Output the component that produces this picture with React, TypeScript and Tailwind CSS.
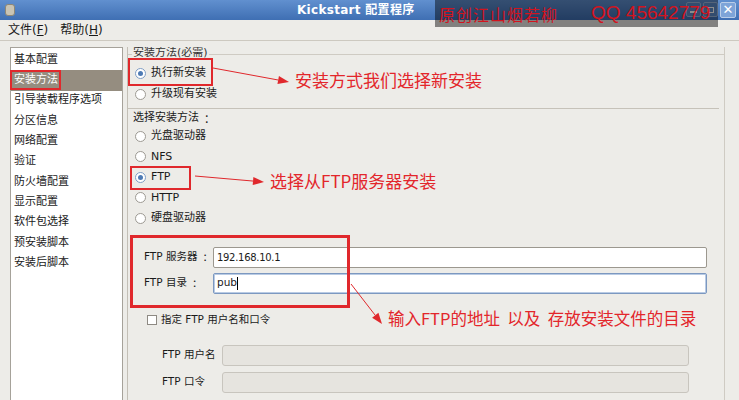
const font = "font-['DejaVu_Sans','Noto_Sans_CJK_SC',sans-serif]"

const sections = [
    "基本配置",
    "安装方法",
    "引导装载程序选项",
    "分区信息",
    "网络配置",
    "验证",
    "防火墙配置",
    "显示配置",
    "软件包选择",
    "预安装脚本",
    "安装后脚本",
]

const Radio = ({ label, checked = false, h = "h-[21px]" }: { label: string, checked?: boolean, h?: string }) => (
    <div className={`flex items-center pl-[7px] gap-[5px] ${h}`}>
        <span className={`w-[11px] h-[11px] rounded-full border bg-white flex items-center justify-center ${checked ? "border-[#7f9dc4]" : "border-[#9d9a93]"}`}>
            {checked && <span className="w-[5px] h-[5px] rounded-full bg-[#4e7bb5]" />}
        </span>
        <span>{label}</span>
    </div>
)

const Colon = () => <span className="ml-[5px] font-['Noto_Sans_CJK_SC',sans-serif]">：</span>

const Arrow = ({ x1, y1, x2, y2 }: { x1: number, y1: number, x2: number, y2: number }) => {
    const a = Math.atan2(y2 - y1, x2 - x1)
    const l = 11
    const w = 4
    const bx = x2 - l * Math.cos(a)
    const by = y2 - l * Math.sin(a)
    const p1 = `${bx + w * Math.sin(a)},${by - w * Math.cos(a)}`
    const p2 = `${bx - w * Math.sin(a)},${by + w * Math.cos(a)}`
    return (
        <g>
            <line x1={x1} y1={y1} x2={bx} y2={by} stroke="#e0282c" strokeWidth="1" />
            <polygon points={`${x2},${y2} ${p1} ${p2}`} fill="#e0282c" />
        </g>
    )
}

const App = () => {
    return (
        <div className={`relative w-[739px] h-[400px] overflow-hidden bg-[#edece8] text-[11px] text-[#1a1a1a] ${font}`}>

            {/* title bar */}
            <div className="h-[20px] bg-gradient-to-b from-[#6190cf] to-[#3f6fb3] flex items-center relative">
                <span className="ml-[5px] w-[10px] h-[12px] rounded-[3px] bg-[#c9c4b4] border border-[#8d8776]" />
                <span className="absolute left-[297px] text-white font-bold text-[12px] tracking-[0.3px]">Kickstart 配置程序</span>
                <div className="ml-auto mr-[3px] flex gap-[2px]">
                    <span className="w-[15px] h-[15px] rounded-[2px] border border-[#9bb6dc] bg-[#5d8bc9] flex items-end justify-center pb-[3px]">
                        <span className="w-[7px] h-[2px] bg-white" />
                    </span>
                    <span className="w-[15px] h-[15px] rounded-[2px] border border-[#9bb6dc] bg-[#5d8bc9] flex items-center justify-center">
                        <span className="w-[7px] h-[6px] border border-white" />
                    </span>
                    <span className="w-[16px] h-[16px] rounded-[2px] border border-[#b9cde8] bg-[#7ea4d8] text-white font-bold text-[13px] leading-[14px] text-center">✕</span>
                </div>
            </div>

            {/* menu bar */}
            <div className="h-[21px] flex items-center gap-[12px] pl-[8px] text-[12px] border-b border-[#cdc9c0]">
                <span>文件(<span className="underline">F</span>)</span>
                <span>帮助(<span className="underline">H</span>)</span>
            </div>

            {/* body */}
            <div className="flex pt-[6px] h-[359px]">
                <div className="ml-[10px] w-[113px] bg-white border border-[#a6a29a] border-b-0 pt-[2px]">
                    {sections.map((s, i) => (
                        <div key={s} className={`h-[20.3px] flex items-center pl-[3px] ${i === 1 ? "bg-[#958d80] text-white" : ""}`}>{s}</div>
                    ))}
                </div>
                <div className="ml-[2px] w-[3px] border-r border-[#c3bfb6]" />

                <div className="flex-1 flex flex-col mr-[14px] border-r border-[#cfcbc3] overflow-hidden">
                    <div className="h-[14px] flex items-center">
                        <span className="w-[4px] h-px bg-[#cfcbc3]" />
                        <span className="px-[1px] text-[#333] -mt-[2px]">安装方法(必需)</span>
                        <span className="flex-1 h-px bg-[#cfcbc3]" />
                    </div>
                    <div className="mt-[2px]">
                        <Radio label="执行新安装" checked />
                        <Radio label="升级现有安装" />
                    </div>
                    <div className="mt-[3px] h-px bg-[#c6c2b9] mr-[5px]" />
                    <div className="mt-px h-[16px] flex items-center pl-[5px]">选择安装方法<Colon /></div>
                    <Radio label="光盘驱动器" h="h-[20.5px]" />
                    <Radio label="NFS" h="h-[20.5px]" />
                    <Radio label="FTP" checked h="h-[20.5px]" />
                    <Radio label="HTTP" h="h-[20.5px]" />
                    <Radio label="硬盘驱动器" h="h-[20.5px]" />

                    <div className="mt-[18px] flex flex-col gap-[5px] pl-[16px] pr-[17px] text-[10.5px]">
                        <div className="flex items-center h-[21px]">
                            <span className="w-[69px] flex">FTP 服务器<Colon /></span>
                            <div className="flex-1 h-full bg-white border border-[#9c988f] rounded-[2px] flex items-center pl-[3px] text-[10px] tracking-[-0.3px]">192.168.10.1</div>
                        </div>
                        <div className="flex items-center h-[21px]">
                            <span className="w-[69px] flex">FTP 目录<Colon /></span>
                            <div className="flex-1 h-full bg-white border border-[#7c98c0] rounded-[2px] flex items-center pl-[3px] shadow-[inset_0_0_0_1px_#b9cbe4]">
                                pub<span className="w-px h-[13px] bg-black" />
                            </div>
                        </div>
                    </div>

                    <div className="mt-[17px] h-[18px] flex items-center gap-[4px] pl-[19px]">
                        <span className="w-[10px] h-[10px] bg-white border border-[#8e8a83]" />
                        <span className="text-[10.5px]">指定 FTP 用户名和口令</span>
                    </div>

                    <div className="mt-[16px] flex flex-col gap-[6px] pl-[34px] pr-[35px] text-[10.5px]">
                        <div className="flex items-center h-[21px]">
                            <span className="w-[60px]">FTP 用户名</span>
                            <div className="flex-1 h-full bg-[#e6e4df] border border-[#c8c5be] rounded-[3px]" />
                        </div>
                        <div className="flex items-center h-[21px]">
                            <span className="w-[60px]">FTP 口令</span>
                            <div className="flex-1 h-full bg-[#e6e4df] border border-[#c8c5be] rounded-[3px]" />
                        </div>
                    </div>
                </div>
            </div>

            {/* watermark */}
            <div className="absolute left-[435px] top-0 w-[283px] h-[27px] bg-black/45 flex items-center gap-[33px] pl-[4px] text-[#d3141e] whitespace-nowrap">
                <span className="shrink-0 text-[16px] tracking-[1px] font-['Noto_Sans_CJK_SC',sans-serif]">原创江山烟若柳</span>
                <span className="shrink-0 text-[19px] font-['Liberation_Sans',sans-serif]">QQ 45642779</span>
            </div>

            {/* annotations */}
            <div className="absolute left-[10px] top-[70px] w-[51px] h-[20px] border-2 border-[#e0282c]" />
            <div className="absolute left-[128px] top-[58px] w-[85px] h-[28px] border-2 border-[#e0282c]" />
            <div className="absolute left-[130px] top-[166px] w-[61px] h-[24px] border-2 border-[#e0282c]" />
            <div className="absolute left-[130px] top-[235px] w-[220px] h-[73px] border-[3px] border-[#e0282c]" />
            <svg className="absolute left-0 top-0" width="739" height="400">
                <Arrow x1={213} y1={68} x2={289} y2={82} />
                <Arrow x1={195} y1={176} x2={264} y2={182} />
                <Arrow x1={351} y1={284} x2={382} y2={324} />
            </svg>
            <div className="absolute left-[295px] top-[70px] text-[17px] leading-[20px] text-[#e3262b] font-['Noto_Sans_CJK_SC',sans-serif]">安装方式我们选择新安装</div>
            <div className="absolute left-[270px] top-[171px] text-[17px] leading-[20px] text-[#e3262b] font-['Noto_Sans_CJK_SC',sans-serif]">选择从FTP服务器安装</div>
            <div className="absolute left-[388px] top-[308px] text-[16.5px] leading-[20px] text-[#e3262b] whitespace-pre font-['Noto_Sans_CJK_SC',sans-serif]">输入FTP的地址  以及  存放安装文件的目录</div>
        </div>
    )
}

export default App
